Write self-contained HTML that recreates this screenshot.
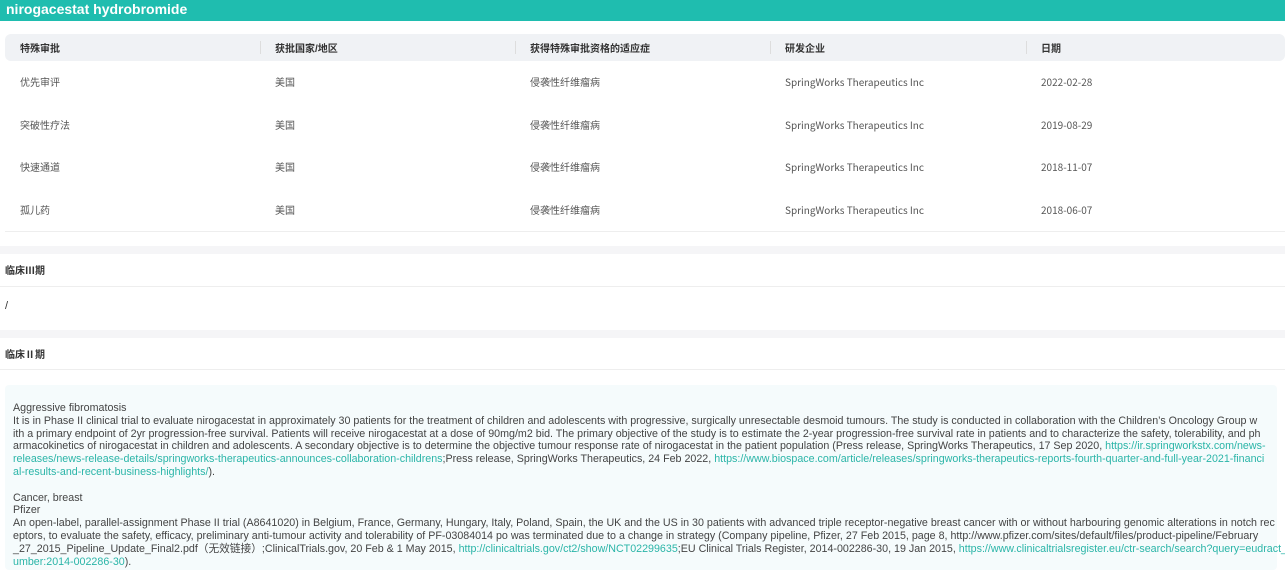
<!DOCTYPE html>
<html><head><meta charset="utf-8"><style>
*{margin:0;padding:0;box-sizing:border-box}
body{width:1285px;height:570px;overflow:hidden;background:#fff;font-family:"Liberation Sans","Noto Sans CJK SC",sans-serif;color:#333}
.top{height:21px;background:#1fbdaf;color:#fff;font-weight:bold;font-size:14px;line-height:18px;padding-left:6px}
table{position:absolute;left:5px;top:34px;width:1280px;border-collapse:collapse;font-size:10px}
th{background:#f0f2f5;height:27px;text-align:left;font-weight:bold;padding-left:15px;color:#333;position:relative}
th+th:before{content:"";position:absolute;left:0;top:7px;height:13px;border-left:1px solid #ddd}
th:first-child{border-radius:6px 0 0 6px}th:last-child{border-radius:0 6px 6px 0}
td{height:42.5px;padding:0 0 0 15px;color:#555;vertical-align:top}
td div{height:42.5px;line-height:42px;font-family:"Noto Sans CJK SC",sans-serif;font-size:10px}
tr:last-child td{border-bottom:1px solid #eee}
.abs{position:absolute;left:0;width:1285px}
.gap{background:#f5f5f7;height:8px}
.ttl{font-size:10px;font-weight:bold;padding-left:5px;border-bottom:1px solid #eee;font-family:"Noto Sans CJK SC",sans-serif}
.box{position:absolute;left:5px;top:385px;width:1272px;height:185px;background:#f5fbfc;border-radius:4px;padding:17px 0 0 8px;font-size:10.7px;line-height:12.8px;color:#444}
.box div{white-space:nowrap}
a{color:#2bb5a8;text-decoration:none}
</style></head><body>
<div class="top">nirogacestat hydrobromide</div>
<table>
<tr><th style="width:255px">特殊审批</th><th style="width:255px">获批国家/地区</th><th style="width:255px">获得特殊审批资格的适应症</th><th style="width:256px">研发企业</th><th>日期</th></tr>
<tr><td><div>优先审评</div></td><td><div>美国</div></td><td><div>侵袭性纤维瘤病</div></td><td><div>SpringWorks Therapeutics Inc</div></td><td><div>2022-02-28</div></td></tr>
<tr><td><div>突破性疗法</div></td><td><div>美国</div></td><td><div>侵袭性纤维瘤病</div></td><td><div>SpringWorks Therapeutics Inc</div></td><td><div>2019-08-29</div></td></tr>
<tr><td><div>快速通道</div></td><td><div>美国</div></td><td><div>侵袭性纤维瘤病</div></td><td><div>SpringWorks Therapeutics Inc</div></td><td><div>2018-11-07</div></td></tr>
<tr><td><div>孤儿药</div></td><td><div>美国</div></td><td><div>侵袭性纤维瘤病</div></td><td><div>SpringWorks Therapeutics Inc</div></td><td><div>2018-06-07</div></td></tr>
</table>
<div class="abs gap" style="top:246px"></div>
<div class="abs ttl" style="top:254px;height:33px;line-height:32px">临床Ⅲ期</div>
<div class="abs" style="top:300px;font-size:11px;padding-left:5px">/</div>
<div class="abs gap" style="top:330px"></div>
<div class="abs ttl" style="top:338px;height:32px;line-height:31px">临床Ⅱ期</div>
<div class="box">
<div>Aggressive fibromatosis</div>
<div>It is in Phase II clinical trial to evaluate nirogacestat in approximately 30 patients for the treatment of children and adolescents with progressive, surgically unresectable desmoid tumours. The study is conducted in collaboration with the Children’s Oncology Group w</div>
<div>ith a primary endpoint of 2yr progression-free survival. Patients will receive nirogacestat at a dose of 90mg/m2 bid. The primary objective of the study is to estimate the 2-year progression-free survival rate in patients and to characterize the safety, tolerability, and ph</div>
<div>armacokinetics of nirogacestat in children and adolescents. A secondary objective is to determine the objective tumour response rate of nirogacestat in the patient population (Press release, SpringWorks Therapeutics, 17 Sep 2020, <a>https://ir.springworkstx.com/news-</a></div>
<div><a>releases/news-release-details/springworks-therapeutics-announces-collaboration-childrens</a>;Press release, SpringWorks Therapeutics, 24 Feb 2022, <a>https://www.biospace.com/article/releases/springworks-therapeutics-reports-fourth-quarter-and-full-year-2021-financi</a></div>
<div><a>al-results-and-recent-business-highlights/</a>).</div>
<div>&nbsp;</div>
<div>Cancer, breast</div>
<div>Pfizer</div>
<div>An open-label, parallel-assignment Phase II trial (A8641020) in Belgium, France, Germany, Hungary, Italy, Poland, Spain, the UK and the US in 30 patients with advanced triple receptor-negative breast cancer with or without harbouring genomic alterations in notch rec</div>
<div>eptors, to evaluate the safety, efficacy, preliminary anti-tumour activity and tolerability of PF-03084014 po was terminated due to a change in strategy (Company pipeline, Pfizer, 27 Feb 2015, page 8, http://www.pfizer.com/sites/default/files/product-pipeline/February</div>
<div>_27_2015_Pipeline_Update_Final2.pdf（无效链接）;ClinicalTrials.gov, 20 Feb &amp; 1 May 2015, <a>http://clinicaltrials.gov/ct2/show/NCT02299635</a>;EU Clinical Trials Register, 2014-002286-30, 19 Jan 2015, <a>https://www.clinicaltrialsregister.eu/ctr-search/search?query=eudract_n</a></div>
<div><a>umber:2014-002286-30</a>).</div>
</div>
</body></html>
